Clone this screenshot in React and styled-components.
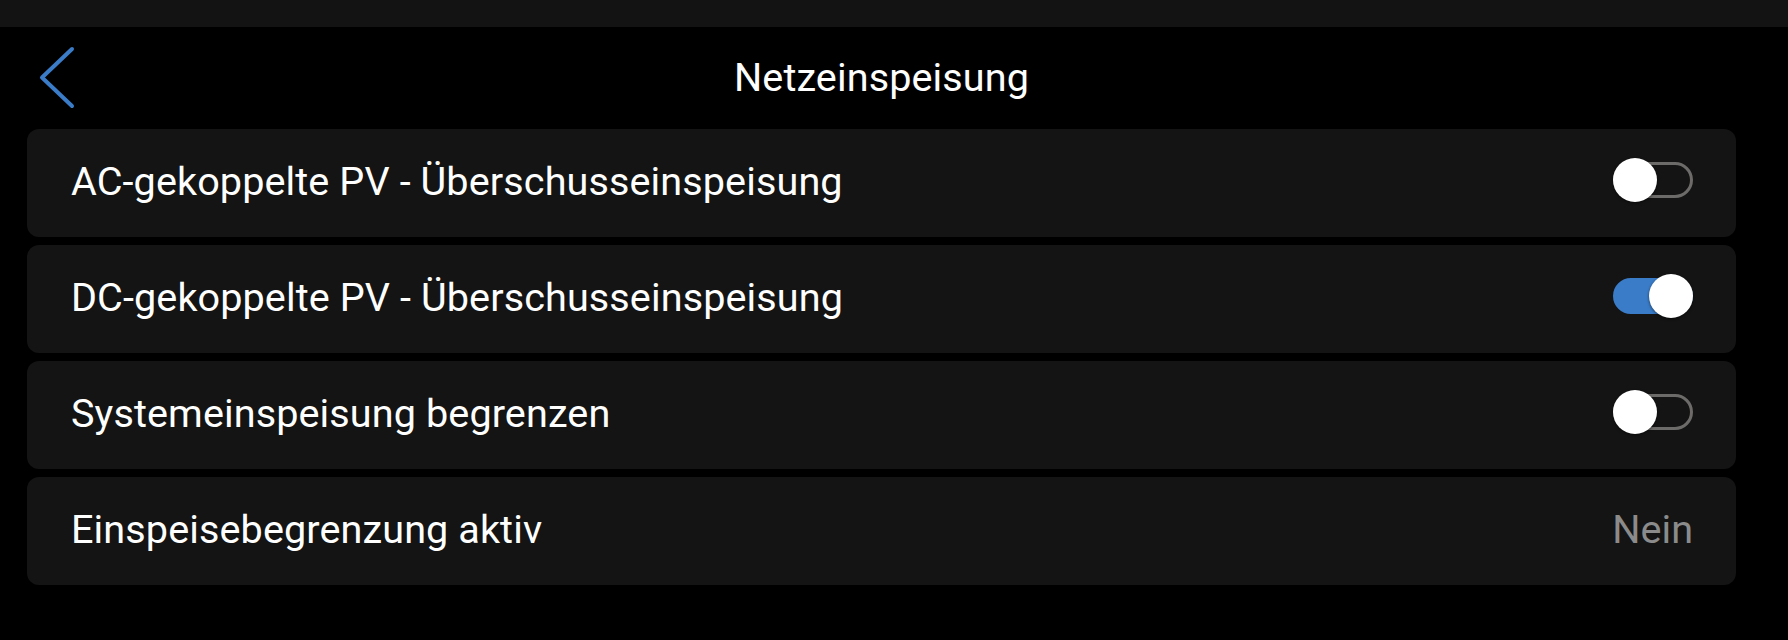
import { useState } from 'react';
import styled, { createGlobalStyle } from 'styled-components';

const GlobalStyle = createGlobalStyle`
  html, body {
    margin: 0;
    padding: 0;
    background: #000;
    font-family: Roboto, "Noto Sans", "Liberation Sans", sans-serif;
    -webkit-font-smoothing: antialiased;
  }
`;

const Page = styled.div`
  width: 1788px;
  height: 640px;
  background: #000;
  overflow: hidden;
`;

const StatusBar = styled.div`
  height: 27px;
  background: #131313;
`;

const Content = styled.div`
  padding: 0 52px 0 27px;
`;

const Header = styled.header`
  height: 102px;
  display: grid;
  grid-template-columns: 1fr auto 1fr;
  align-items: center;
`;

const BackButton = styled.button`
  justify-self: start;
  display: flex;
  align-items: center;
  padding: 0 0 0 11px;
  margin: 0;
  border: none;
  background: none;
  cursor: pointer;
`;

const Title = styled.h1`
  margin: 0 0 2px;
  font-size: 39.6px;
  font-weight: 400;
  color: #fff;
  letter-spacing: 0.1px;
`;

const List = styled.div`
  display: flex;
  flex-direction: column;
  gap: 8px;
`;

const Row = styled.div`
  height: 108px;
  box-sizing: border-box;
  padding: 0 43px 0 44px;
  background: #141414;
  border-radius: 12px;
  display: flex;
  align-items: center;
  justify-content: space-between;
`;

const Label = styled.span`
  margin-bottom: 4px;
  font-size: 39.6px;
  color: #fff;
  letter-spacing: 0.1px;
`;

const Value = styled.span`
  margin-bottom: 3px;
  font-size: 39.6px;
  color: #8b8b8b;
`;

const Track = styled.button`
  position: relative;
  width: 80px;
  height: 36px;
  margin: 0 0 7px 0;
  padding: 0;
  box-sizing: border-box;
  border-radius: 18px;
  border: 3px solid ${p => (p.$on ? '#3a7cc8' : '#6c6b69')};
  background: ${p => (p.$on ? '#3a7cc8' : 'transparent')};
  cursor: pointer;
`;

const Knob = styled.span`
  position: absolute;
  top: -7px;
  left: ${p => (p.$on ? '33px' : '-3px')};
  width: 44px;
  height: 44px;
  border-radius: 50%;
  background: #fff;
  box-shadow: 0 1px 3px rgba(0, 0, 0, 0.55);
`;

const Toggle = ({ on, onChange }) => (
  <Track $on={on} onClick={() => onChange(!on)}>
    <Knob $on={on} />
  </Track>
);

const BackIcon = () => (
  <svg width="40" height="66" viewBox="0 0 40 66">
    <polyline
      points="34,4 4,32.5 34,61"
      fill="none"
      stroke="#3a7cc8"
      strokeWidth="4"
      strokeLinecap="round"
      strokeLinejoin="round"
    />
  </svg>
);

const App = () => {
  const [ac, setAc] = useState(false);
  const [dc, setDc] = useState(true);
  const [limit, setLimit] = useState(false);

  return (
    <Page>
      <GlobalStyle />
      <StatusBar />
      <Content>
        <Header>
          <BackButton aria-label="Zurück">
            <BackIcon />
          </BackButton>
          <Title>Netzeinspeisung</Title>
          <span />
        </Header>
        <List>
          <Row>
            <Label>AC-gekoppelte PV - Überschusseinspeisung</Label>
            <Toggle on={ac} onChange={setAc} />
          </Row>
          <Row>
            <Label>DC-gekoppelte PV - Überschusseinspeisung</Label>
            <Toggle on={dc} onChange={setDc} />
          </Row>
          <Row>
            <Label>Systemeinspeisung begrenzen</Label>
            <Toggle on={limit} onChange={setLimit} />
          </Row>
          <Row>
            <Label>Einspeisebegrenzung aktiv</Label>
            <Value>{limit ? 'Ja' : 'Nein'}</Value>
          </Row>
        </List>
      </Content>
    </Page>
  );
};

export default App;
